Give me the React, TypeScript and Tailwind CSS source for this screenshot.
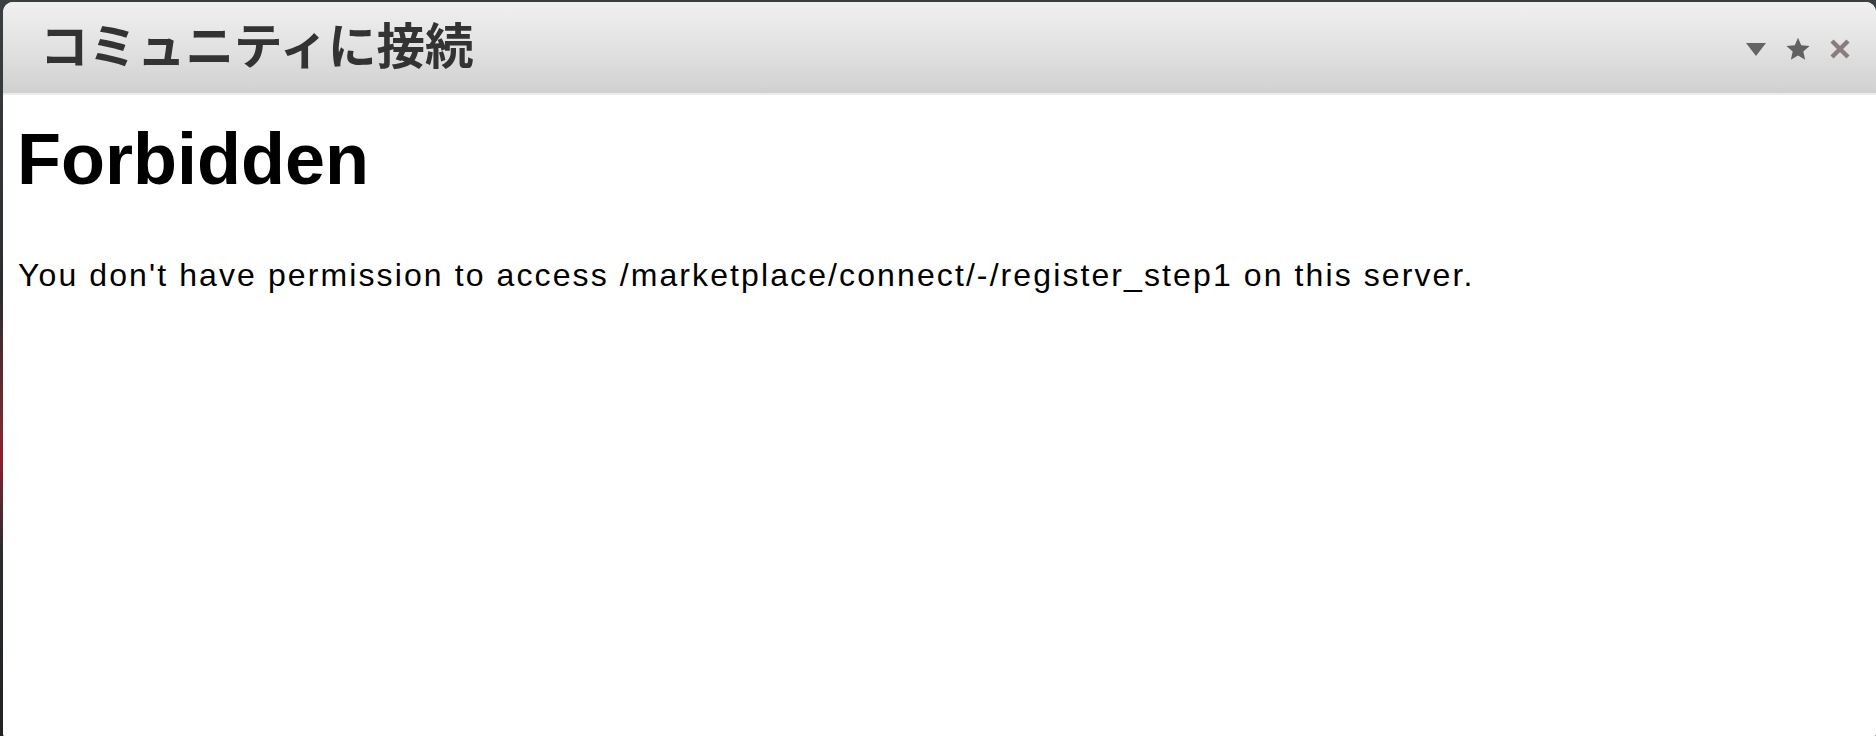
import React from "react";

export default function App() {
  return (
    <div className="relative w-[1876px] h-[736px] overflow-hidden bg-[linear-gradient(180deg,#3a3f42_0%,#2a2d30_40%,#7a2a30_58%,#8a2030_62%,#2a2d30_75%,#202224_100%)]">
      <div className="ml-[3px] mt-[2px] w-[1873px] h-[740px] flex flex-col rounded-[10px] overflow-hidden bg-white">
        <div className="h-[91px] shrink-0 flex items-center justify-between bg-[linear-gradient(180deg,#f0f0f0_0%,#e2e2e2_50%,#d0d0d0_100%)] pl-[37px] pr-[25px]">
          <div
            className="text-[48.5px] font-bold text-[#333333] leading-none pb-[8px]"
            style={{ fontFamily: '"Noto Sans CJK JP", "Noto Sans", sans-serif' }}
          >
            コミュニティに接続
          </div>
          <div className="flex items-center gap-[18px] pt-[2px]">
            <svg width="22" height="18" viewBox="0 0 22 18">
              <path d="M1 3 L21 3 L11 16 Z" fill="#646464" />
            </svg>
            <svg width="26" height="26" viewBox="0 0 24 24">
              <path
                d="M12 1.5 L15 8.6 L22.7 9.3 L16.9 14.4 L18.6 22 L12 18 L5.4 22 L7.1 14.4 L1.3 9.3 L9 8.6 Z"
                fill="#616161"
              />
            </svg>
            <svg width="22" height="22" viewBox="0 0 22 22">
              <path d="M3 3 L19 19 M19 3 L3 19" stroke="#8b7c7c" strokeWidth="4.5" strokeLinecap="butt" />
            </svg>
          </div>
        </div>
        <div className="h-[2px] shrink-0 bg-[#ececec]" />
        <div
          className="flex-1 bg-white pl-[14px] pt-[23px]"
          style={{ fontFamily: '"Liberation Sans", Arial, sans-serif' }}
        >
          <h1 className="text-[72px] font-bold text-black leading-[82px]">Forbidden</h1>
          <p className="mt-[55px] pl-[1px] text-[32px] text-black leading-[40px] tracking-[2.1px]">
            You don't have permission to access /marketplace/connect/-/register_step1 on this server.
          </p>
        </div>
      </div>
    </div>
  );
}
